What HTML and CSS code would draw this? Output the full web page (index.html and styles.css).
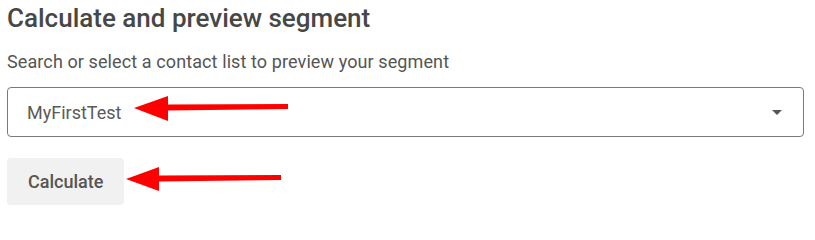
FILE: index.html
```html
<!DOCTYPE html>
<html lang="en">
<head>
<meta charset="utf-8">
<title>Calculate and preview segment</title>
<link rel="stylesheet" href="styles.css">
</head>
<body>
<main class="panel">
  <h2 class="title">Calculate and preview segment</h2>
  <p class="label">Search or select a contact list to preview your segment</p>
  <div class="select">
    <span class="select-value">MyFirstTest</span>
    <span class="caret"></span>
  </div>
  <button class="btn" type="button">Calculate</button>
</main>
<svg class="annot" width="815" height="213" viewBox="0 0 815 213" aria-hidden="true">
  <polygon fill="#ff0000" points="134,108 168,96 168,104.5 288,104 288,109 168,110.5 168,121"/>
  <polygon fill="#ff0000" points="126,179 159,167 159,175.5 281,175 281,180 159,181.5 159,191"/>
</svg>
</body>
</html>
```
FILE: styles.css
```css
html, body {
  margin: 0;
  padding: 0;
  background: #ffffff;
}
body {
  font-family: Roboto, "Liberation Sans", Arial, sans-serif;
  width: 815px;
  height: 213px;
  overflow: hidden;
  position: relative;
}
.panel {
  padding: 0 11px 0 7px;
  display: flex;
  flex-direction: column;
  align-items: flex-start;
}
.title {
  margin: 3px 0 0;
  font-size: 26px;
  line-height: 30px;
  font-weight: 500;
  color: #474747;
}
.label {
  margin: 18px 0 0;
  font-size: 18px;
  line-height: 21px;
  font-weight: 400;
  letter-spacing: 0.1px;
  color: #555555;
}
.select {
  margin-top: 15px;
  box-sizing: border-box;
  width: 797px;
  height: 50px;
  border: 1px solid #7a7a7a;
  border-radius: 4px;
  display: flex;
  align-items: center;
  justify-content: space-between;
  padding: 0 21px 0 19px;
}
.select-value {
  font-size: 18px;
  color: #5a5a5a;
}
.caret {
  width: 0;
  height: 0;
  border-left: 5px solid transparent;
  border-right: 5px solid transparent;
  border-top: 5px solid #555555;
}
.btn {
  margin-top: 21px;
  height: 47px;
  padding: 0 21px;
  border: none;
  border-radius: 4px;
  background: #f1f1f1;
  font-family: inherit;
  font-size: 18px;
  font-weight: 500;
  color: #555555;
}
.annot {
  position: absolute;
  left: 0;
  top: 0;
  pointer-events: none;
}
```
